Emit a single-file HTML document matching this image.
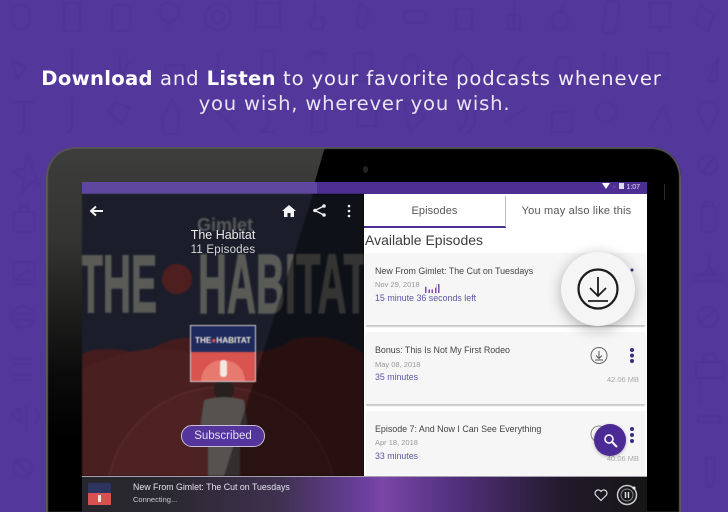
<!DOCTYPE html>
<html><head><meta charset="utf-8">
<style>
html,body{margin:0;padding:0;width:728px;height:512px;overflow:hidden;background:#54379a}
body{position:relative;font-family:"Liberation Sans",sans-serif}
.a{position:absolute}
.t{position:absolute;white-space:nowrap;filter:blur(.35px)}
.card{position:absolute;left:366px;width:279px;background:#f6f6f6;box-shadow:0 2px 1px #c9c9c9}
</style></head>
<body>
<svg class="a" style="left:0;top:0;filter:blur(.7px)" width="728" height="512" fill="none" stroke="#4b3292" stroke-width="1">
<g transform="translate(0 -5)">
<rect x="12" y="10" width="18" height="24" rx="8"/><rect x="64" y="8" width="16" height="28" rx="2"/><rect x="112" y="10" width="18" height="26" rx="4"/><path d="M170 8a9 9 0 0 1 0 18l-2 10-2-10a9 9 0 0 1 4-18z"/><circle cx="218" cy="22" r="13"/><circle cx="218" cy="22" r="6"/><rect x="256" y="8" width="24" height="24"/><path d="M315 8v14l-6 4 3 8h10l3-10-6-2"/><path d="M360 10l10 4-6 20-8-4z"/><rect x="404" y="16" width="22" height="12" rx="3"/><rect x="456" y="14" width="16" height="20" rx="3"/><path d="M514 6v28M508 20h12v14h-12z"/><circle cx="560" cy="26" r="9"/><path d="M560 17l6-10"/><rect x="604" y="6" width="14" height="32" rx="4" transform="rotate(8 610 22)"/><rect x="650" y="8" width="20" height="24"/><path d="M660 32v6"/><path d="M700 10l14 10-6 16-14-8z"/>
</g>
<g transform="translate(0 -27)">
<path d="M12 88l14 6-8 12zM72 78v28M120 80v24l10-16M166 92h18v12h-18zM218 80v20h-8v8M262 78h12v30h-12zM312 78a12 12 0 0 1 12 12M306 84a18 18 0 0 1 24 0"/>
<rect x="354" y="80" width="18" height="28" rx="3"/><rect x="404" y="82" width="14" height="28" rx="6"/><path d="M462 82l10 8v16h-18v-16z"/><path d="M510 106l14-24"/><rect x="556" y="84" width="14" height="24" rx="4"/><path d="M604 80v16a6 6 0 0 0 12 0v-14"/><rect x="648" y="80" width="20" height="26"/><path d="M708 108l10-24-2 24z"/>
</g>
<g transform="translate(0 -48)">
<path d="M12 150h22M24 150v28l-6 4M72 148v26a6 6 0 0 1-6 6M108 160l14 12 8-16-14-6zM172 148l8 14-4 20h-12l-2-16zM206 150l24 22 4 6M268 150v24l-8 6h14M312 150h14v30h-14zM358 150h18v24h-18zM410 180l14-14-6-14h-14zM458 152a14 14 0 0 1 0 26M466 148a20 20 0 0 1 0 34M504 170l22-14M552 160h20v20h-20zM606 150a10 10 0 1 1 0 20 10 10 0 1 1 0-20M650 178l14-24 8 24M698 160a10 10 0 0 1 20 0l-10 20-10-20z"/>
</g>
<path d="M28 155l-4 14-12 2 12 8-2 14 10-12 8 4-6-12z"/>
<path d="M14 212h20v20h-20zM20 212v-6h8v6"/>
<path d="M14 262h20v18h-20zM14 280l14-10 6 4M12 284h24"/>
<circle cx="23" cy="317" r="11"/><path d="M14 314h18M14 320h18"/>
<path d="M13 359h19M13 364h19M13 375h19M13 380h19"/>
<path d="M12 414l8-6v14zM34 408l6 8-6 8M26 404v26"/>
<circle cx="23" cy="468" r="9"/><path d="M16 462l14 12"/>
<circle cx="708" cy="165" r="9"/><path d="M702 172l12-14"/>
<rect x="702" y="206" width="14" height="26" rx="3"/><path d="M705 206v-4h8v4"/>
<path d="M709 254v14l-6 6h12l-6-6M694 275h28v6h-28z"/>
<circle cx="708" cy="317" r="10"/><path d="M700 322l16-12"/>
<path d="M696 362h28v16h-28zM702 362l4-8h8l4 8M700 378v24"/>
<path d="M698 416h22v6h-22z"/>
<path d="M706 458v24l4 6 4-6v-24z"/>
</svg>

<div class="t" style="left:0;width:703px;top:66px;text-align:center;line-height:25px;color:#f2eff8;font-family:'DejaVu Sans',sans-serif;font-size:19.6px;letter-spacing:.88px"><b style="color:#fff;letter-spacing:.3px">Download</b> and <b style="color:#fff;letter-spacing:.3px">Listen</b> to your favorite podcasts whenever</div>
<div class="t" style="left:0;width:709px;top:91px;text-align:center;line-height:25px;color:#e8e4f2;font-family:'DejaVu Sans',sans-serif;font-size:19.6px;letter-spacing:.8px">you wish, wherever you wish.</div>

<!-- tablet -->
<div class="a" style="left:46px;top:147px;width:635px;height:365px;border-radius:30px 30px 0 0;background:linear-gradient(180deg,#3d3d3b 0,#343432 25%,#0b0b0b 62%,#000 80%);overflow:hidden">
  <div class="a" style="left:0;top:0;width:635px;height:365px;background:#000;clip-path:polygon(279px 0,635px 0,635px 365px,172px 365px)"></div>
  <div class="a" style="left:0;top:0;width:635px;height:365px;border-radius:30px 30px 0 0;box-shadow:inset 0 3px 1px -1px #55555a,inset -2px 0 1px #5a5a60,inset 2px 0 1px #5a5a60"></div>
</div>
<div class="a" style="left:363px;top:166px;width:5px;height:7px;border-radius:50%;background:#242428"></div>
<div class="a" style="left:664px;top:184px;width:1px;height:16px;background:#2c2c2c"></div>

<!-- screen -->
<div class="a" style="left:82px;top:182px;width:565px;height:12px;background:#4d2f94"></div>
<div class="a" style="left:82px;top:182px;width:235px;height:12px;background:#5f469f"></div>
<div class="t" style="left:602px;top:183px;font-size:7px;line-height:10px;color:#e6e2f2"><span style="display:inline-block;width:0;height:0;border-left:4px solid transparent;border-right:4px solid transparent;border-top:6px solid #fff;margin-right:3px"></span><span style="opacity:.5">◦</span> <span style="display:inline-block;width:5px;height:6px;background:#dcd8ec;margin:0 2px"></span>1:07</div>

<!-- left panel -->
<svg class="a" style="left:82px;top:194px;filter:blur(.9px)" width="282" height="282" viewBox="0 0 282 282">
<defs><clipPath id="g"><polygon points="231,0 282,0 282,282 142,282"/></clipPath></defs>
<rect width="282" height="282" fill="#1b1e2a"/>
<g font-family="Liberation Sans,sans-serif" font-weight="bold" fill="#5a5a57" stroke="#5a5a57" stroke-width="1.500">
<text x="-3" y="118" font-size="82" textLength="78" lengthAdjust="spacingAndGlyphs">THE</text>
<text x="116" y="119" font-size="84" textLength="170" lengthAdjust="spacingAndGlyphs">HABITAT</text>
</g>
<circle cx="95" cy="85" r="15" fill="#4f1e1f"/>
<path d="M0 160Q20 150 60 160Q100 135 130 148Q170 170 210 146Q250 136 282 160V282H0Z" fill="#451c1d"/>
<path d="M0 175Q60 145 110 160L140 282H0Z" fill="#4a1f20"/>
<path d="M27 282A115 115 0 0 1 251 282Z" fill="#5a2727" fill-opacity=".3" stroke="#7a4a4a" stroke-opacity=".4"/>
<circle cx="142" cy="196" r="10" fill="#26201f"/>
<path d="M122 206Q142 200 162 206L168 248 158 250 158 282H126L126 250 116 248Z" fill="#565250"/>
<text x="115" y="37" font-size="18" font-weight="bold" fill="#5a5a5c" font-family="Liberation Sans,sans-serif">Gimlet</text>
<g clip-path="url(#g)"><rect width="282" height="282" fill="#000" fill-opacity=".42"/></g>
</svg>

<!-- cover -->
<div class="a" style="left:190px;top:325px;width:66px;height:57px;border:1px solid #d6cfd2;box-sizing:border-box;overflow:hidden;background:#1f2a5c;filter:blur(.4px)">
  <div class="a" style="left:0;top:26px;width:64px;height:29px;background:#d9534f"></div>
  <div class="a" style="left:10px;top:34px;width:44px;height:21px;background:#e8796e;border-radius:22px 22px 0 0"></div>
  <div class="a" style="left:29px;top:34px;width:7px;height:17px;background:#f3e9e3;border-radius:3px"></div>
  <div class="a" style="left:0;top:9px;width:64px;text-align:center;color:#f3ecdf;font-weight:bold;font-size:8.2px;line-height:12px;white-space:nowrap">THE<span style="color:#d94f4f">●</span>HABITAT</div>
</div>

<div class="t" style="left:82px;width:282px;top:227px;text-align:center;font-size:12.5px;line-height:16px;color:#ece9ea">The Habitat</div>
<div class="t" style="left:82px;width:282px;top:243px;text-align:center;font-size:11.5px;line-height:15px;color:#d8d6d8;letter-spacing:.2px">11 Episodes</div>

<svg class="a" style="left:89px;top:203px" width="270" height="16" viewBox="0 0 270 16" fill="none">
<path d="M2 8h12M7 3.500L2 8l5 4.500" stroke="#f2f2f2" stroke-width="2"/>
<path d="M193 8l7-6 7 6h-2v6h-3.500v-4h-3v4H195V8z" fill="#f5f5f5"/>
<path d="M235 3l-9 4.500 9 4.500" stroke="#eee" stroke-width="1.500"/><circle cx="235" cy="3" r="1.800" fill="#eee"/><circle cx="226" cy="7.500" r="1.800" fill="#eee"/><circle cx="235" cy="12" r="1.800" fill="#eee"/>
<circle cx="260" cy="3" r="1.300" fill="#eee"/><circle cx="260" cy="8" r="1.300" fill="#eee"/><circle cx="260" cy="13" r="1.300" fill="#eee"/>
</svg>

<div class="a" style="left:181px;top:425px;width:84px;height:22px;box-sizing:border-box;border:1.500px solid #c9bfdc;border-radius:11px;background:#53359c;color:#e2ddf0;font-size:11.500px;line-height:20px;text-align:center;filter:blur(.3px)">Subscribed</div>

<!-- right panel -->
<div class="a" style="left:364px;top:194px;width:283px;height:282px;background:#fff"></div>
<div class="a" style="left:364px;top:226px;width:142px;height:2px;background:#4d2f94;filter:blur(.3px)"></div>
<div class="a" style="left:505px;top:196px;width:1px;height:31px;background:#bdbdc4"></div>
<div class="t" style="left:364px;width:141px;top:204px;text-align:center;font-size:11px;line-height:14px;color:#555;letter-spacing:.1px">Episodes</div>
<div class="t" style="left:506px;width:141px;top:204px;text-align:center;font-size:11px;line-height:14px;color:#555;letter-spacing:.2px">You may also like this</div>
<div class="t" style="left:365px;top:231px;font-size:14px;line-height:18px;color:#3c3c3c">Available Episodes</div>

<div class="card" style="top:253px;height:72px"></div>
<div class="card" style="top:332px;height:72px"></div>
<div class="card" style="top:411px;height:65px;box-shadow:none"></div>

<div class="t" style="left:375px;top:265px;font-size:8.900px;line-height:12px;color:#444">New From Gimlet: The Cut on Tuesdays</div>
<div class="t" style="left:375px;top:280px;font-size:7.500px;line-height:10px;color:#999">Nov 29, 2018</div>
<div class="a" style="left:425px;top:284px;width:16px;height:9px;background:repeating-linear-gradient(90deg,#7d4aa8 0 1.500px,transparent 1.500px 3.300px);clip-path:polygon(0 30%,20% 30%,20% 60%,50% 60%,50% 40%,70% 40%,70% 0,100% 0,100% 100%,0 100%)"></div>
<div class="t" style="left:375px;top:292px;font-size:8.900px;line-height:12px;color:#5c55a8">15 minute 36 seconds left</div>

<div class="t" style="left:375px;top:344px;font-size:8.900px;line-height:12px;color:#444">Bonus: This Is Not My First Rodeo</div>
<div class="t" style="left:375px;top:360px;font-size:7.500px;line-height:10px;color:#999">May 08, 2018</div>
<div class="t" style="left:375px;top:371px;font-size:8.800px;line-height:12px;color:#5c55a8">35 minutes</div>
<div class="t" style="right:89px;top:375px;font-size:7.500px;line-height:10px;color:#aaa">42.06 MB</div>

<div class="t" style="left:375px;top:423px;font-size:8.900px;line-height:12px;color:#444">Episode 7: And Now I Can See Everything</div>
<div class="t" style="left:375px;top:438px;font-size:7.500px;line-height:10px;color:#999">Apr 18, 2018</div>
<div class="t" style="left:375px;top:450px;font-size:8.800px;line-height:12px;color:#5c55a8">33 minutes</div>
<div class="t" style="right:89px;top:454px;font-size:7.500px;line-height:10px;color:#aaa">40.06 MB</div>

<svg class="a" style="left:585px;top:260px;filter:blur(.2px)" width="55" height="215" viewBox="585 260 55 215" fill="none">
<circle cx="632" cy="270" r="1.500" fill="#3b2a86"/>
<circle cx="632" cy="350" r="2" fill="#3b2a86"/><circle cx="632" cy="355.500" r="2" fill="#3b2a86"/><circle cx="632" cy="361" r="2" fill="#3b2a86"/>
<circle cx="632" cy="429" r="2" fill="#3b2a86"/><circle cx="632" cy="435" r="2" fill="#3b2a86"/><circle cx="632" cy="441" r="2" fill="#3b2a86"/>
<circle cx="599" cy="355.500" r="8" stroke="#666" stroke-width="1"/>
<path d="M599 351v7M596 355.500l3 3 3-3M595 360h8" stroke="#555"/>
<circle cx="599" cy="434" r="8" stroke="#888" stroke-width="1"/>
</svg>

<!-- big download button -->
<div class="a" style="left:561px;top:252px;width:74px;height:74px;border-radius:50%;background:#f5f5f5;box-shadow:0 3px 14px rgba(0,0,0,.3)"></div>
<svg class="a" style="left:576px;top:267px;filter:blur(.3px)" width="44" height="44" viewBox="0 0 44 44" fill="none" stroke="#1c1c1c">
<circle cx="22" cy="22" r="19.500" stroke-width="2.200"/>
<path d="M22 10v18M14 21l8 8 8-8" stroke-width="1.800"/>
<path d="M12 34h20" stroke-width="1.800"/>
</svg>

<!-- search FAB -->
<div class="a" style="left:594px;top:424px;width:32px;height:32px;border-radius:50%;background:#4b2a96;box-shadow:0 1px 3px rgba(0,0,0,.3)"></div>
<svg class="a" style="left:603px;top:433px" width="15" height="15" viewBox="0 0 15 15" fill="none" stroke="#f1edf8" stroke-width="1.700">
<circle cx="6" cy="6" r="4"/><path d="M9 9l5 5" stroke-width="2.200"/>
</svg>

<!-- player -->
<div class="a" style="left:82px;top:476px;width:565px;height:36px;background:linear-gradient(90deg,#26262c 0,#2a2830 15%,#3f3150 35%,#6b3f9f 50%,#7a46a8 53%,#52307e 66%,#221a2c 85%,#161616 100%);border-top:1px solid #a79fae;box-sizing:border-box"></div>
<div class="a" style="left:88px;top:483px;width:23px;height:22px;background:#2d3460;overflow:hidden">
  <div class="a" style="left:0;top:10px;width:23px;height:12px;background:#d95050"></div>
  <div class="a" style="left:10px;top:12px;width:3px;height:7px;background:#f1e3de"></div>
</div>
<div class="t" style="left:133px;top:481px;font-size:8.800px;line-height:12px;color:#e6e2ee">New From Gimlet: The Cut on Tuesdays</div>
<div class="t" style="left:133px;top:495px;font-size:7.500px;line-height:10px;color:#cfcad6">Connecting...</div>
<svg class="a" style="left:592px;top:484px" width="50" height="26" viewBox="0 0 50 26" fill="none">
<path d="M9 16.500L3.500 11a3.200 3.200 0 0 1 5.500-3.500A3.200 3.200 0 0 1 14.500 11z" stroke="#e8e8e8" stroke-width="1.100"/>
<circle cx="35" cy="11" r="9.500" stroke="#c9c9c9" stroke-width="1.500"/>
<circle cx="35" cy="11" r="6" stroke="#8a8a8a"/>
<path d="M33.500 8v6M36.500 8v6" stroke="#ddd" stroke-width="1.500"/>
<circle cx="42" cy="4" r="1.500" fill="#eee"/>
</svg>
</body></html>
